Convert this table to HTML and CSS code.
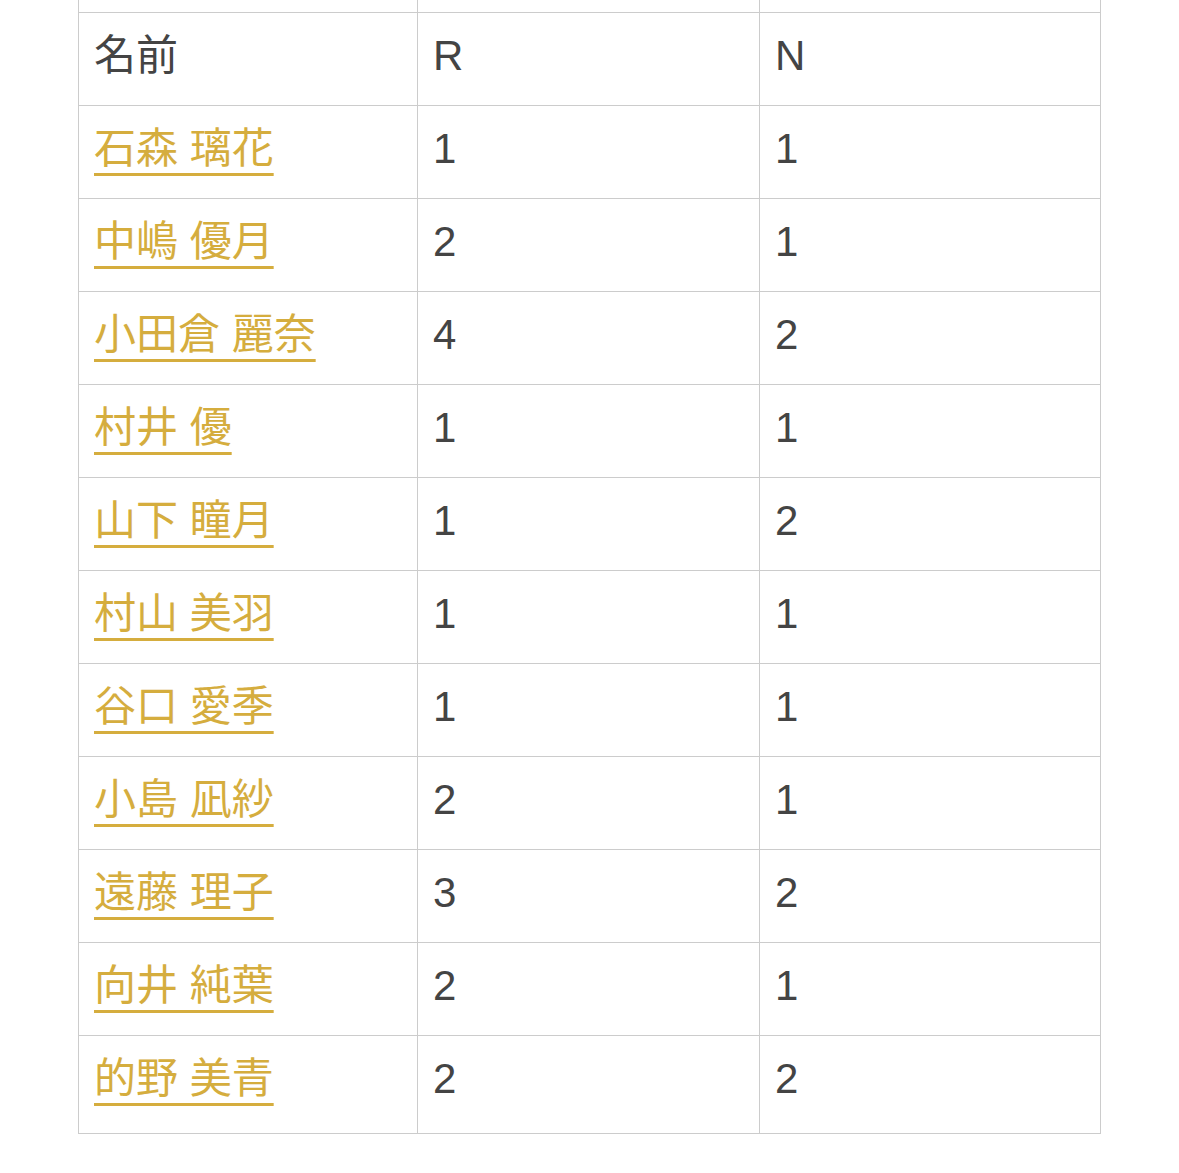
FILE: index.html
```html
<!DOCTYPE html>
<html lang="ja">
<head>
<meta charset="utf-8">
<link rel="stylesheet" href="styles.css">
</head>
<body>
<table class="score-table">
  <colgroup>
    <col class="col-name">
    <col class="col-r">
    <col class="col-n">
  </colgroup>
  <tbody>
    <tr class="cut-row"><td></td><td></td><td></td></tr>
    <tr><td>名前</td><td>R</td><td>N</td></tr>
    <tr><td><a href="#">石森 璃花</a></td><td>1</td><td>1</td></tr>
    <tr><td><a href="#">中嶋 優月</a></td><td>2</td><td>1</td></tr>
    <tr><td><a href="#">小田倉 麗奈</a></td><td>4</td><td>2</td></tr>
    <tr><td><a href="#">村井 優</a></td><td>1</td><td>1</td></tr>
    <tr><td><a href="#">山下 瞳月</a></td><td>1</td><td>2</td></tr>
    <tr><td><a href="#">村山 美羽</a></td><td>1</td><td>1</td></tr>
    <tr><td><a href="#">谷口 愛季</a></td><td>1</td><td>1</td></tr>
    <tr><td><a href="#">小島 凪紗</a></td><td>2</td><td>1</td></tr>
    <tr><td><a href="#">遠藤 理子</a></td><td>3</td><td>2</td></tr>
    <tr><td><a href="#">向井 純葉</a></td><td>2</td><td>1</td></tr>
    <tr class="last-row"><td><a href="#">的野 美青</a></td><td>2</td><td>2</td></tr>
  </tbody>
</table>
</body>
</html>
```

FILE: styles.css
```css
html, body {
  margin: 0;
  padding: 0;
  background: #ffffff;
}

body {
  font-family: "Liberation Sans", "Noto Sans CJK JP", sans-serif;
  color: #444444;
  font-size: 42px;
}

.score-table {
  width: 1022px;
  margin: 0 auto;
  border-collapse: collapse;
  table-layout: fixed;
}

.col-name { width: 339px; }
.col-r { width: 342px; }
.col-n { width: 341px; }

.score-table td {
  border: 1px solid #cccccc;
  padding: 12px 15px 18px 15px;
  line-height: 62px;
  height: 62px;
  vertical-align: middle;
  text-align: left;
  box-sizing: content-box;
}

.score-table .cut-row td {
  border-top: none;
  padding: 0;
  height: 12px;
  line-height: 12px;
}

.score-table .last-row td {
  padding-bottom: 23px;
}

.score-table a {
  color: #d5ad3e;
  text-decoration: underline;
  text-decoration-thickness: 3px;
  text-underline-offset: 10px;
}
```
